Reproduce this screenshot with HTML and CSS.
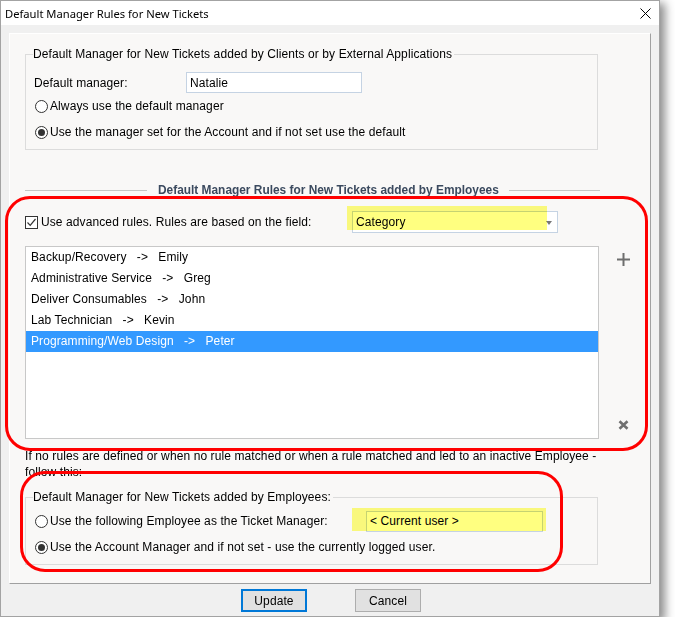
FILE: index.html
```html
<!DOCTYPE html>
<html>
<head>
<meta charset="utf-8">
<title>Default Manager Rules for New Tickets</title>
<link rel="stylesheet" href="styles.css">
</head>
<body>
<div class="window">
  <div class="titlebar">
    <span class="title">Default Manager Rules for New Tickets</span>
    <svg class="close" width="11" height="11" viewBox="0 0 11 11"><path d="M0.5 0.5L10.5 10.5M10.5 0.5L0.5 10.5" stroke="#000" stroke-width="1" fill="none"/></svg>
  </div>
  <div class="client">
    <div class="panel">
      <fieldset class="group g1">
        <legend>Default Manager for New Tickets added by Clients or by External Applications</legend>
        <div class="frow"><span class="label">Default manager:</span><span class="textbox tb-manager">Natalie</span></div>
        <div class="rrow"><span class="radio"></span><span>Always use the default manager</span></div>
        <div class="rrow"><span class="radio checked"></span><span>Use the manager set for the Account and if not set use the default</span></div>
      </fieldset>

      <div class="sep">
        <span class="sep-line left"></span>
        <span class="sep-text">Default Manager Rules for New Tickets added by Employees</span>
        <span class="sep-line right"></span>
      </div>

      <div class="rules">
        <span class="checkbox"><svg width="11" height="11" viewBox="0 0 11 11"><path d="M1.5 5.5L4.2 8.3L9.5 2" stroke="#333" stroke-width="1.2" fill="none"/></svg></span>
        <span class="rules-text">Use advanced rules. Rules are based on the field:</span>
        <span class="combo">Category<span class="arrow"></span><span class="hl hl-combo"></span></span>
      </div>

      <div class="list-area">
        <div class="listbox">
          <div class="item">Backup/Recovery   -&gt;   Emily</div>
          <div class="item">Administrative Service   -&gt;   Greg</div>
          <div class="item">Deliver Consumables   -&gt;   John</div>
          <div class="item">Lab Technician   -&gt;   Kevin</div>
          <div class="item sel">Programming/Web Design   -&gt;   Peter</div>
        </div>
        <div class="side">
          <svg width="13" height="13" viewBox="0 0 13 13"><path d="M6.5 0V13M0 6.5H13" stroke="#6e6e6e" stroke-width="2" fill="none"/></svg>
          <svg width="11" height="10" viewBox="0 0 11 10"><path d="M1.5 1.2L9.5 8.8M9.5 1.2L1.5 8.8" stroke="#707070" stroke-width="2.6" fill="none"/></svg>
        </div>
      </div>

      <p class="note">If no rules are defined or when no rule matched or when a rule matched and led to an inactive Employee -<br>follow this:</p>

      <fieldset class="group g2">
        <legend>Default Manager for New Tickets added by Employees:</legend>
        <div class="rrow first"><span class="radio"></span><span class="emp-label">Use the following Employee as the Ticket Manager:</span><span class="textbox tb-user">&lt; Current user &gt;<span class="hl hl-user"></span></span></div>
        <div class="rrow"><span class="radio checked"></span><span>Use the Account Manager and if not set - use the currently logged user.</span></div>
      </fieldset>
    </div>
    <div class="buttons">
      <button class="btn default">Update</button>
      <button class="btn">Cancel</button>
    </div>
  </div>
  <div class="annot a1"></div>
  <div class="annot a2"></div>
</div>
</body>
</html>
```
FILE: styles.css
```css
html, body {
  margin: 0;
  background: #ffffff;
}
body {
  font-family: "Liberation Sans", Arial, sans-serif;
  font-size: 12px;
  letter-spacing: 0.1px;
  color: #000;
}
.window {
  position: relative;
  width: 660px;
  height: 617px;
  box-sizing: border-box;
  border: 1px solid #a3a3a3;
  background: #f0f0f0;
  box-shadow: 4px 4px 9px 1px rgba(0, 0, 0, 0.45);
  display: flex;
  flex-direction: column;
}
.titlebar {
  height: 24px;
  background: #ffffff;
  display: flex;
  align-items: center;
  justify-content: space-between;
  padding: 0 8px 0 4px;
  flex: none;
}
.title {
  font-family: "Noto Sans", "Liberation Sans", sans-serif;
  font-size: 11.2px;
  letter-spacing: 0;
  color: #000;
}
.client {
  flex: 1;
  display: flex;
  flex-direction: column;
  padding: 8px 0 0 8px;
}
.panel {
  width: 642px;
  height: 551px;
  box-sizing: border-box;
  border: 1px solid;
  border-color: #ffffff #a0a0a0 #a0a0a0 #ffffff;
  background: #f9f8f7;
  padding: 13px 15px 0;
  flex: none;
}
fieldset.group {
  margin: 0;
  width: 573px;
  box-sizing: border-box;
  min-width: 0;
  border: 1px solid #dcdcdc;
  padding: 0 0 4px 9px;
}
fieldset.group legend {
  padding: 0 2px 0 0;
  margin-left: -2px;
  line-height: 14px;
}
.frow {
  display: flex;
  align-items: center;
  height: 21px;
  margin-top: 11px;
}
.label {
  width: 152px;
  margin-left: -1px;
}
.textbox {
  position: relative;
  display: flex;
  align-items: center;
  height: 21px;
  box-sizing: border-box;
  border: 1px solid #c5d3e3;
  background: #fff;
  padding-left: 3px;
}
.tb-manager {
  width: 176px;
}
.rrow {
  display: flex;
  align-items: center;
  height: 26px;
}
.radio {
  width: 13px;
  height: 13px;
  box-sizing: border-box;
  border: 1px solid #333;
  border-radius: 50%;
  background: #fff;
  margin-right: 2px;
  display: flex;
  align-items: center;
  justify-content: center;
  flex: none;
}
.radio.checked::after {
  content: "";
  width: 7px;
  height: 7px;
  border-radius: 50%;
  background: #333;
}
.sep {
  display: flex;
  align-items: center;
  height: 16px;
  margin-top: 32px;
  width: 575px;
}
.sep-line {
  height: 0;
  border-top: 1px solid #c4c4c4;
}
.sep-line.left {
  width: 122px;
  margin-right: 11px;
  flex: none;
}
.sep-line.right {
  flex: 1;
  margin-left: 10px;
}
.sep-text {
  font-weight: bold;
  color: #3b4a5f;
  white-space: nowrap;
  letter-spacing: 0;
  font-size: 11.9px;
}
.rules {
  display: flex;
  align-items: center;
  height: 22px;
  margin-top: 13px;
}
.checkbox {
  width: 13px;
  height: 13px;
  box-sizing: border-box;
  border: 1px solid #333;
  background: #fff;
  margin-right: 3px;
  display: flex;
  align-items: center;
  justify-content: center;
  flex: none;
}
.rules-text {
  width: 311px;
  white-space: nowrap;
  flex: none;
}
.combo {
  position: relative;
  width: 206px;
  height: 22px;
  box-sizing: border-box;
  border: 1px solid #c5d3e3;
  background: #fff;
  padding-left: 3px;
  display: flex;
  align-items: center;
  flex: none;
}
.arrow {
  position: absolute;
  right: 5px;
  top: 9px;
  width: 0;
  height: 0;
  border-left: 3.5px solid transparent;
  border-right: 3.5px solid transparent;
  border-top: 4px solid #777;
}
.hl {
  position: absolute;
  background: #ffff80;
  mix-blend-mode: multiply;
}
.hl-combo {
  left: -6px;
  top: -6px;
  width: 200px;
  height: 24px;
}
.list-area {
  display: flex;
  margin-top: 13px;
}
.listbox {
  width: 574px;
  height: 193px;
  box-sizing: border-box;
  border: 1px solid #c8c8c8;
  background: #fff;
  flex: none;
}
.item {
  height: 21px;
  line-height: 21px;
  padding-left: 5px;
  white-space: pre;
}
.item.sel {
  background: #3399ff;
  color: #fff;
}
.side {
  width: 48px;
  flex: none;
  display: flex;
  flex-direction: column;
  align-items: center;
  justify-content: space-between;
  padding: 7px 0 9px;
}
.note {
  margin: 9px 0 0;
  line-height: 16px;
  white-space: nowrap;
}
fieldset.g2 {
  margin-top: 10px;
}
.rrow.first {
  margin-top: 4px;
}
.emp-label {
  width: 316px;
  white-space: nowrap;
  flex: none;
}
.tb-user {
  width: 177px;
}
.hl-user {
  left: -15px;
  top: -4px;
  width: 194px;
  height: 23px;
}
.buttons {
  display: flex;
  justify-content: center;
  gap: 48px;
  padding: 5px 6px 0 0;
}
.btn {
  width: 66px;
  height: 23px;
  box-sizing: border-box;
  border: 1px solid #adadad;
  background: #e1e1e1;
  font-family: "Liberation Sans", Arial, sans-serif;
  font-size: 12px;
  letter-spacing: 0.1px;
  color: #000;
  padding: 0;
}
.btn.default {
  border: 2px solid #0078d7;
}
.annot {
  position: absolute;
  box-sizing: border-box;
  border: 3px solid #ff0000;
  border-radius: 25px;
  pointer-events: none;
}
.a1 {
  left: 4px;
  top: 195px;
  width: 643px;
  height: 255px;
}
.a2 {
  left: 19px;
  top: 470px;
  width: 543px;
  height: 101px;
}
```
